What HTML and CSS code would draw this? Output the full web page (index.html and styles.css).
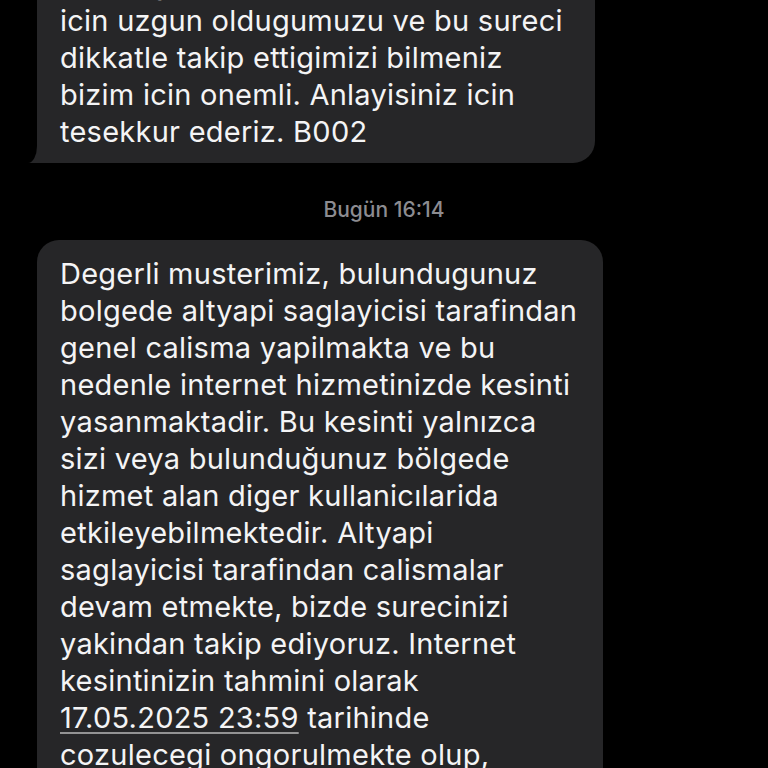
FILE: index.html
```html
<!DOCTYPE html>
<html lang="tr">
<head>
<meta charset="utf-8">
<title>Mesajlar</title>
<link rel="stylesheet" href="styles.css">
</head>
<body>
<main class="thread">
  <div class="row">
    <div class="bubble bubble-top tail">
      <p class="msg">yasadiginiz bu olumsuz durum<br>icin uzgun oldugumuzu ve bu sureci<br>dikkatle takip ettigimizi bilmeniz<br>bizim icin onemli. Anlayisiniz icin<br>tesekkur ederiz. B002</p>
    </div>
  </div>
  <div class="stamp"><span class="stamp-day">Bugün</span> 16:14</div>
  <div class="row">
    <div class="bubble bubble-main">
      <p class="msg">Degerli musterimiz, bulundugunuz<br>bolgede altyapi saglayicisi tarafindan<br>genel calisma yapilmakta ve bu<br>nedenle internet hizmetinizde kesinti<br>yasanmaktadir. Bu kesinti yalnızca<br>sizi veya bulunduğunuz bölgede<br>hizmet alan diger kullanicılarida<br>etkileyebilmektedir. Altyapi<br>saglayicisi tarafindan calismalar<br>devam etmekte, bizde surecinizi<br>yakindan takip ediyoruz. Internet<br>kesintinizin tahmini olarak<br><span class="link">17.05.2025 23:59</span> tarihinde<br>cozulecegi ongorulmekte olup,<br>bu sure zarfinda anlayisiniz icin</p>
    </div>
  </div>
</main>
</body>
</html>
```
FILE: styles.css
```css
html, body {
  margin: 0;
  padding: 0;
  background: #000;
  height: 768px;
  overflow: hidden;
}
body {
  font-family: Inter, "Noto Sans", "Liberation Sans", sans-serif;
  color: #f4f4f5;
  -webkit-font-smoothing: antialiased;
}
.thread {
  display: flex;
  flex-direction: column;
  padding-left: 37px;
  margin-top: -39px;
}
.row {
  display: flex;
}
.bubble {
  position: relative;
  background: #262628;
  border-radius: 22px;
  box-sizing: border-box;
  padding: 0 20px 0 23px;
}
.bubble-top {
  width: 558px;
  padding-top: 4px;
  padding-bottom: 13px;
  border-top-left-radius: 0;
  border-top-right-radius: 0;
}
.bubble-main {
  width: 566px;
  padding-top: 15px;
  padding-bottom: 20px;
}
.tail {
  border-bottom-left-radius: 0;
}
.tail::before {
  content: "";
  position: absolute;
  left: -9px;
  bottom: 0;
  width: 14px;
  height: 20px;
  background: #262628;
}
.tail::after {
  content: "";
  position: absolute;
  left: -30px;
  bottom: 0;
  width: 30px;
  height: 22px;
  background: #000;
  border-bottom-right-radius: 9px 17px;
}
.msg {
  margin: 0;
  font-size: 29px;
  line-height: 37px;
  letter-spacing: 0.25px;
  white-space: nowrap;
}
.link {
  text-decoration: underline;
  text-decoration-color: rgba(255, 255, 255, 0.5);
  text-decoration-thickness: 1.5px;
  text-underline-offset: 4px;
}
.stamp {
  align-self: center;
  margin: 34px 0 17px -37px;
  font-size: 21px;
  line-height: 26px;
  color: #8c8c91;
  font-weight: 500;
}
```
